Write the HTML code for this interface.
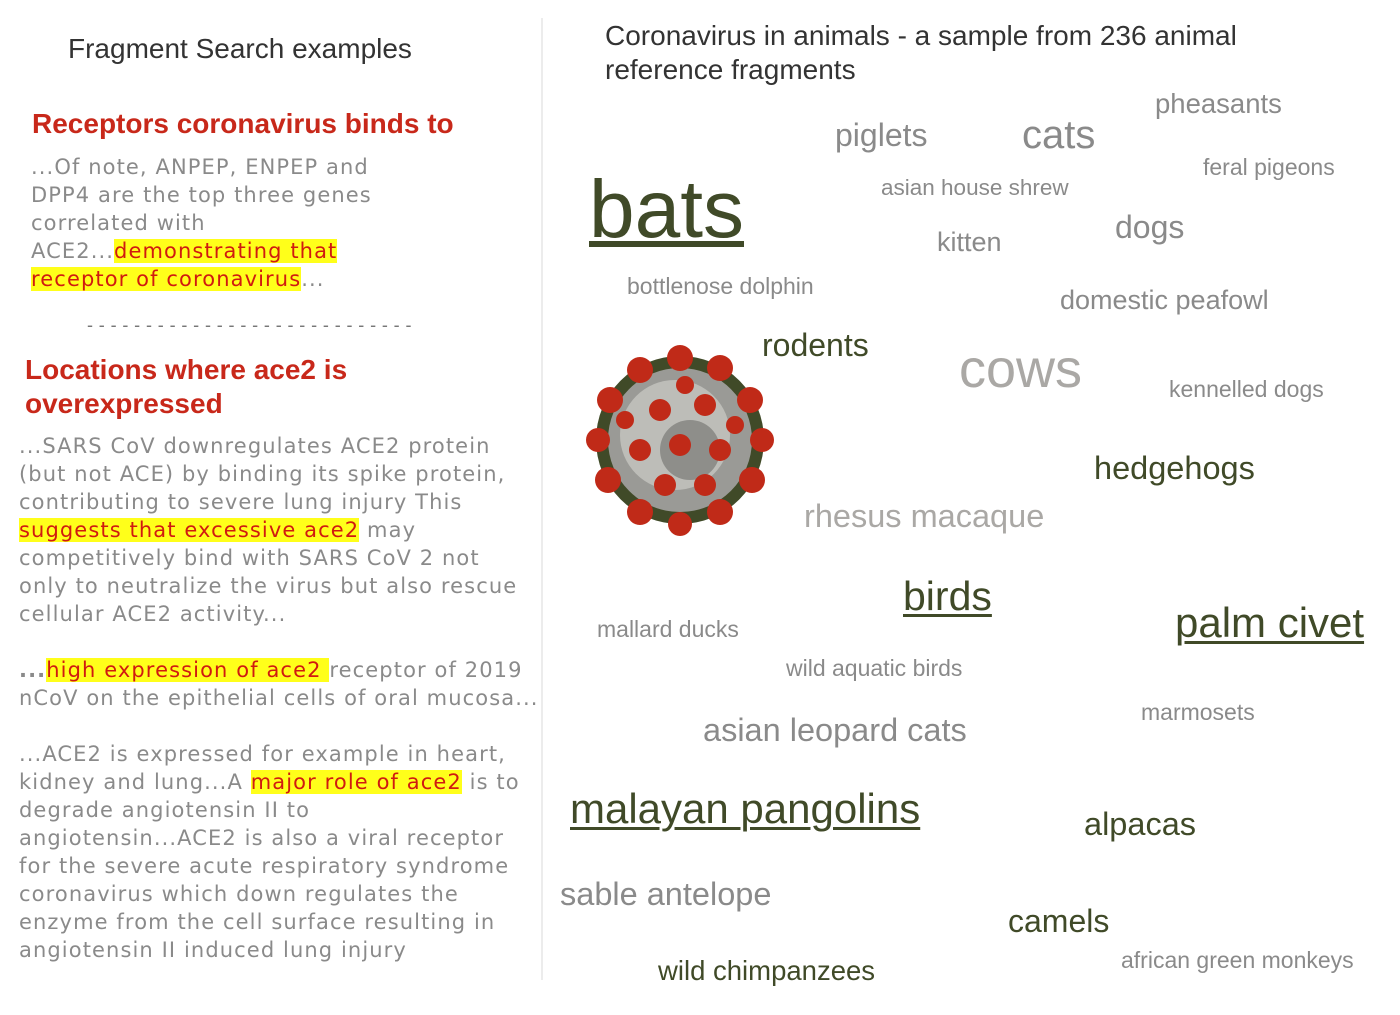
<!DOCTYPE html>
<html><head><meta charset="utf-8"><style>
html,body{margin:0;padding:0;background:#fff;width:1400px;height:1015px;overflow:hidden;position:relative}
.a{position:absolute;white-space:nowrap;font-family:"Liberation Sans",Arial,sans-serif;line-height:1}
.g{color:#8a8a8a}.d{color:#404a28}.l{color:#aaa8a5}
.u{text-decoration:underline;text-underline-offset:4px}
.t{position:absolute;white-space:nowrap;font-family:"DejaVu Sans",Verdana,sans-serif;font-size:21px;letter-spacing:1.1px;color:#8a8a8a;line-height:28px}
.h{background:#ffff1a;color:#d01a10}
.r{position:absolute;white-space:nowrap;font-family:"Liberation Sans",Arial,sans-serif;font-weight:bold;font-size:28px;color:#c8281a;line-height:34px}
</style></head><body>
<div style="position:absolute;left:541px;top:18px;width:2px;height:962px;background:#ececec"></div>
<div class="a" style="left:68px;top:35px;font-size:28px;color:#333">Fragment Search examples</div>
<div class="a" style="left:605px;top:19px;font-size:28px;color:#333;line-height:34px">Coronavirus in animals - a sample from 236 animal<br>reference fragments</div>

<div class="r" style="left:32px;top:107px">Receptors coronavirus binds to</div>
<div class="t" style="left:31px;top:153px">...Of note, ANPEP, ENPEP and</div>
<div class="t" style="left:31px;top:181px">DPP4 are the top three genes</div>
<div class="t" style="left:31px;top:209px">correlated with</div>
<div class="t" style="left:31px;top:237px">ACE2...<span class="h">demonstrating that</span></div>
<div class="t" style="left:31px;top:265px"><span class="h">receptor of coronavirus</span>...</div>
<div class="a" style="left:87px;top:316px;font-size:18px;color:#777;letter-spacing:0.4px">- - - - - - - - - - - - - - - - - - - - - - - - - - - -</div>

<div class="r" style="left:25px;top:353px">Locations where ace2 is<br>overexpressed</div>
<div class="t" style="left:19px;top:432px">...SARS CoV downregulates ACE2 protein</div>
<div class="t" style="left:19px;top:460px">(but not ACE) by binding its spike protein,</div>
<div class="t" style="left:19px;top:488px">contributing to severe lung injury This</div>
<div class="t" style="left:19px;top:516px"><span class="h">suggests that excessive ace2</span> may</div>
<div class="t" style="left:19px;top:544px">competitively bind with SARS CoV 2 not</div>
<div class="t" style="left:19px;top:572px">only to neutralize the virus but also rescue</div>
<div class="t" style="left:19px;top:600px">cellular ACE2 activity...</div>
<div class="t" style="left:19px;top:656px"><b>...</b><span class="h">high expression of ace2 </span>receptor of 2019</div>
<div class="t" style="left:19px;top:684px">nCoV on the epithelial cells of oral mucosa...</div>
<div class="t" style="left:19px;top:740px">...ACE2 is expressed for example in heart,</div>
<div class="t" style="left:19px;top:768px">kidney and lung...A <span class="h">major role of ace2</span> is to</div>
<div class="t" style="left:19px;top:796px">degrade angiotensin II to</div>
<div class="t" style="left:19px;top:824px">angiotensin...ACE2 is also a viral receptor</div>
<div class="t" style="left:19px;top:852px">for the severe acute respiratory syndrome</div>
<div class="t" style="left:19px;top:880px">coronavirus which down regulates the</div>
<div class="t" style="left:19px;top:908px">enzyme from the cell surface resulting in</div>
<div class="t" style="left:19px;top:936px">angiotensin II induced lung injury</div>

<svg style="position:absolute;left:580px;top:340px" width="200" height="200" viewBox="0 0 200 200">
<circle cx="100" cy="100" r="84" fill="#404a28"/>
<circle cx="100" cy="100" r="72" fill="#9a9a96"/>
<circle cx="95" cy="95" r="55" fill="#bdbdb8"/>
<circle cx="110" cy="110" r="30" fill="#8e8e8a"/>
<g fill="#c02a18">
<circle cx="60" cy="30" r="13"/><circle cx="100" cy="18" r="13"/><circle cx="140" cy="28" r="13"/><circle cx="170" cy="60" r="13"/><circle cx="182" cy="100" r="12"/><circle cx="172" cy="140" r="13"/><circle cx="140" cy="172" r="13"/><circle cx="100" cy="184" r="12"/><circle cx="60" cy="172" r="13"/><circle cx="28" cy="140" r="13"/><circle cx="18" cy="100" r="12"/><circle cx="30" cy="60" r="13"/>
<circle cx="80" cy="70" r="11"/><circle cx="125" cy="65" r="11"/><circle cx="60" cy="110" r="11"/><circle cx="100" cy="105" r="11"/><circle cx="140" cy="110" r="11"/><circle cx="85" cy="145" r="11"/><circle cx="125" cy="145" r="11"/><circle cx="105" cy="45" r="9"/><circle cx="45" cy="80" r="9"/><circle cx="155" cy="85" r="9"/>
</g>
</svg>

<div class="a d u" style="left:589px;top:169px;font-size:82px;text-decoration-thickness:6px">bats</div>
<div class="a g" style="left:1022px;top:115px;font-size:40px">cats</div>
<div class="a g" style="left:835px;top:119px;font-size:32px">piglets</div>
<div class="a g" style="left:1155px;top:90px;font-size:27.5px">pheasants</div>
<div class="a g" style="left:1203px;top:156px;font-size:23px">feral pigeons</div>
<div class="a g" style="left:881px;top:177px;font-size:22.5px">asian house shrew</div>
<div class="a g" style="left:937px;top:229px;font-size:27px">kitten</div>
<div class="a g" style="left:1115px;top:211px;font-size:32px">dogs</div>
<div class="a g" style="left:627px;top:275px;font-size:23px">bottlenose dolphin</div>
<div class="a g" style="left:1060px;top:287px;font-size:27px">domestic peafowl</div>
<div class="a d" style="left:762px;top:329px;font-size:32px">rodents</div>
<div class="a l" style="left:959px;top:342px;font-size:54px">cows</div>
<div class="a g" style="left:1169px;top:378px;font-size:23px">kennelled dogs</div>
<div class="a d" style="left:1094px;top:452px;font-size:32.5px">hedgehogs</div>
<div class="a l" style="left:804px;top:500px;font-size:32.5px">rhesus macaque</div>
<div class="a d u" style="left:903px;top:576px;font-size:41px;text-decoration-thickness:3px">birds</div>
<div class="a g" style="left:597px;top:618px;font-size:23px">mallard ducks</div>
<div class="a d u" style="left:1175px;top:602px;font-size:42px;text-decoration-thickness:3px">palm civet</div>
<div class="a g" style="left:786px;top:657px;font-size:23px">wild aquatic birds</div>
<div class="a g" style="left:1141px;top:701px;font-size:23px">marmosets</div>
<div class="a g" style="left:703px;top:714px;font-size:32.5px">asian leopard cats</div>
<div class="a d u" style="left:570px;top:788px;font-size:42px;text-decoration-thickness:3px">malayan pangolins</div>
<div class="a d" style="left:1084px;top:808px;font-size:32.5px">alpacas</div>
<div class="a g" style="left:560px;top:878px;font-size:32.5px">sable antelope</div>
<div class="a d" style="left:1008px;top:905px;font-size:32px">camels</div>
<div class="a g" style="left:1121px;top:949px;font-size:23px">african green monkeys</div>
<div class="a d" style="left:658px;top:957px;font-size:27.5px">wild chimpanzees</div>
</body></html>
